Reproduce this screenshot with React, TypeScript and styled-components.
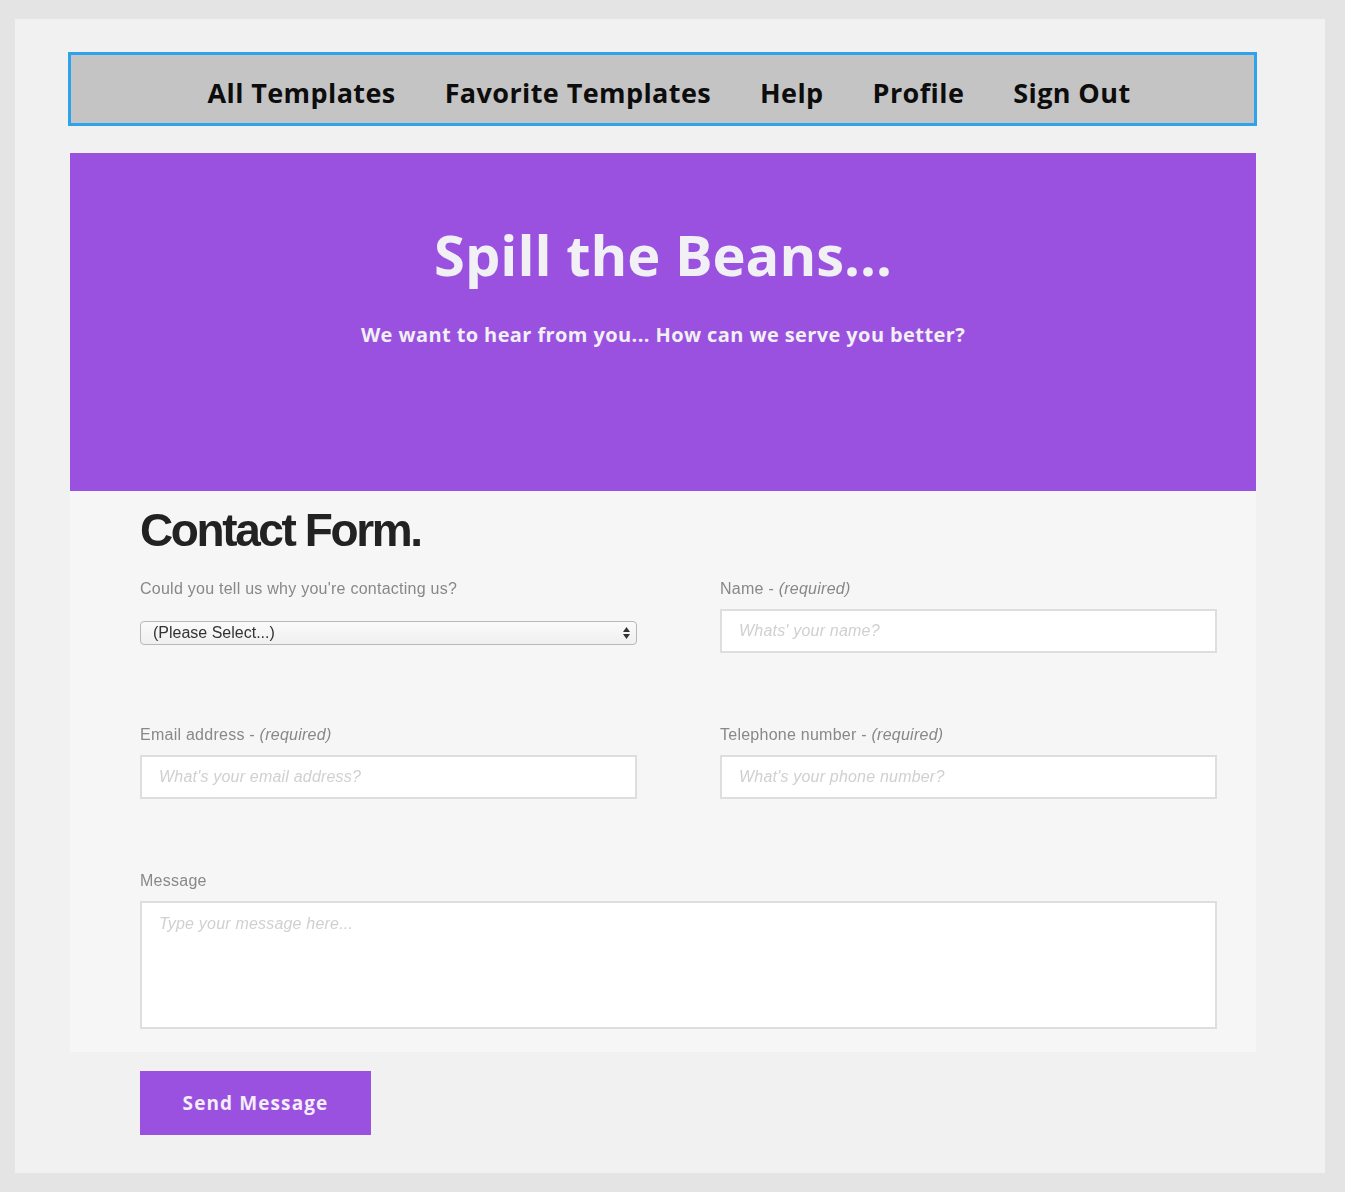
import React from "react";
import styled, { createGlobalStyle } from "styled-components";

const Global = createGlobalStyle`
  html, body { margin: 0; padding: 0; background: #e4e4e4; }
  body { font-family: "Liberation Sans", Arial, sans-serif; }
  * { box-sizing: border-box; }
`;

const Page = styled.div`
  width: 1345px;
  height: 1192px;
  padding: 19px 20px 19px 15px;
  background: #e4e4e4;
`;

const Panel = styled.div`
  height: 100%;
  background: #f1f1f1;
  padding: 33px 68px 0 53px;
  display: flex;
  flex-direction: column;
`;

const Nav = styled.nav`
  height: 74px;
  border: 3px solid #2ea2ea;
  background: #c4c4c4;
  display: flex;
  align-items: center;
  justify-content: center;
  gap: 49px;
  padding: 6px 0 0 13px;
`;

const NavLink = styled.a`
  font-family: "Open Sans", Roboto, sans-serif;
  font-weight: 700;
  font-size: 27px;
  color: #0d0d0d;
  text-decoration: none;
  letter-spacing: 0.4px;
`;

const Hero = styled.header`
  margin: 27px 1px 0 2px;
  height: 338px;
  background: #9b51e0;
  display: flex;
  flex-direction: column;
  align-items: center;
  padding-top: 69px;
`;

const HeroTitle = styled.h1`
  margin: 0;
  font-family: "Open Sans", Roboto, sans-serif;
  font-weight: 700;
  font-size: 56px;
  line-height: 64px;
  color: #f1f0f4;
`;

const HeroSub = styled.p`
  margin: 35px 0 0;
  font-family: "Open Sans", Roboto, sans-serif;
  font-weight: 700;
  font-size: 20px;
  color: #f1f0f4;
  letter-spacing: 0.4px;
`;

const FormArea = styled.section`
  margin: 0 1px 0 2px;
  height: 561px;
  background: #f6f6f6;
  padding: 12px 39px 0 70px;
  filter: blur(0.45px);
`;

const FormTitle = styled.h2`
  margin: 0;
  font-family: "Liberation Sans", Arial, sans-serif;
  font-weight: 700;
  font-size: 46px;
  line-height: 54px;
  letter-spacing: -2.4px;
  color: #222;
`;

const Grid = styled.div`
  margin-top: 22px;
  display: grid;
  grid-template-columns: 497px 497px;
  column-gap: 83px;
  row-gap: 72px;
`;

const Field = styled.div<{ $wide?: boolean }>`
  display: flex;
  flex-direction: column;
  grid-column: ${(p) => (p.$wide ? "1 / -1" : "auto")};
`;

const Label = styled.label`
  font-family: "Liberation Sans", Arial, sans-serif;
  font-size: 16px;
  letter-spacing: 0.25px;
  line-height: 20px;
  color: #888;
  height: 20px;
  margin-bottom: 10px;
  em { font-style: italic; }
`;

const SelectBox = styled.div`
  margin-top: 12px;
  height: 24px;
  border: 1px solid #b8b8b8;
  border-radius: 4px;
  background: linear-gradient(#fafafa, #efefef);
  display: flex;
  align-items: center;
  justify-content: space-between;
  padding: 0 6px 0 12px;
  font-family: "Liberation Sans", Arial, sans-serif;
  font-size: 16px;
  color: #333;
`;

const Arrows = styled.span`
  display: flex;
  flex-direction: column;
  align-items: center;
  gap: 2px;
`;

const Input = styled.div`
  height: 44px;
  background: #fff;
  border: 2px solid #dedede;
  padding: 0 17px;
  display: flex;
  align-items: center;
  font-family: "Liberation Sans", Arial, sans-serif;
  font-style: italic;
  font-size: 16px;
  letter-spacing: 0.2px;
  color: #d0d0d0;
`;

const TextArea = styled(Input)`
  height: 128px;
  align-items: flex-start;
  padding-top: 12px;
`;

const Footer = styled.div`
  padding: 19px 0 0 72px;
`;

const SendButton = styled.button`
  width: 231px;
  height: 64px;
  border: none;
  background: #9b51e0;
  color: #f3eef9;
  font-family: "Open Sans", Roboto, sans-serif;
  font-weight: 700;
  font-size: 19px;
  letter-spacing: 1.1px;
`;

export default function App() {
  const links = ["All Templates", "Favorite Templates", "Help", "Profile", "Sign Out"];
  return (
    <Page>
      <Global />
      <Panel>
        <Nav>
          {links.map((l) => (
            <NavLink key={l} href="#">
              {l}
            </NavLink>
          ))}
        </Nav>
        <Hero>
          <HeroTitle>Spill the Beans...</HeroTitle>
          <HeroSub>We want to hear from you... How can we serve you better?</HeroSub>
        </Hero>
        <FormArea>
          <FormTitle>Contact Form.</FormTitle>
          <Grid>
            <Field>
              <Label>Could you tell us why you're contacting us?</Label>
              <SelectBox>
                <span>(Please Select...)</span>
                <Arrows>
                  <svg width="7" height="5" viewBox="0 0 7 5">
                    <path d="M3.5 0 L7 5 L0 5 Z" fill="#333" />
                  </svg>
                  <svg width="7" height="5" viewBox="0 0 7 5">
                    <path d="M0 0 L7 0 L3.5 5 Z" fill="#333" />
                  </svg>
                </Arrows>
              </SelectBox>
            </Field>
            <Field>
              <Label>
                Name - <em>(required)</em>
              </Label>
              <Input>Whats' your name?</Input>
            </Field>
            <Field>
              <Label>
                Email address - <em>(required)</em>
              </Label>
              <Input>What's your email address?</Input>
            </Field>
            <Field>
              <Label>
                Telephone number - <em>(required)</em>
              </Label>
              <Input>What's your phone number?</Input>
            </Field>
            <Field $wide>
              <Label>Message</Label>
              <TextArea>Type your message here...</TextArea>
            </Field>
          </Grid>
        </FormArea>
        <Footer>
          <SendButton>Send Message</SendButton>
        </Footer>
      </Panel>
    </Page>
  );
}
